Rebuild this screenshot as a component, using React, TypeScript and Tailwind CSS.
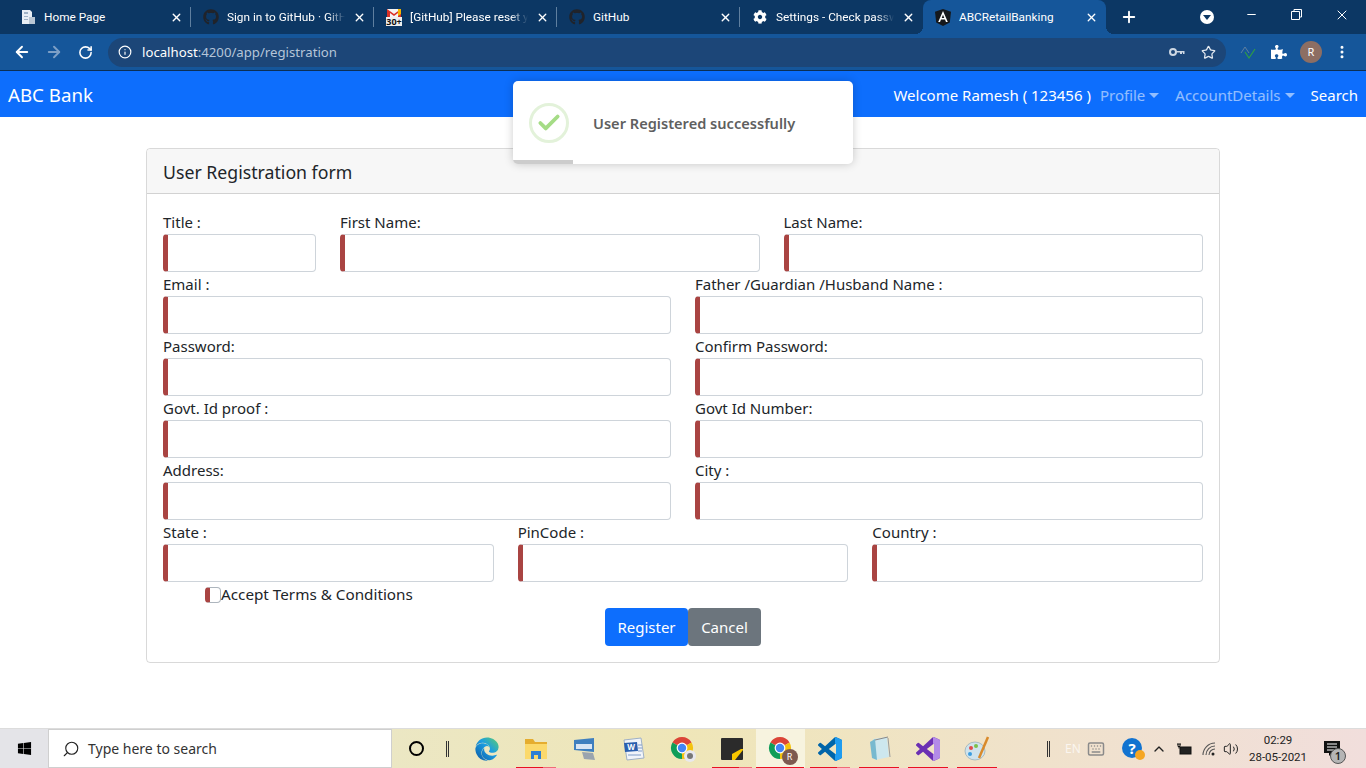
import { ArrowLeft, ArrowRight, RotateCw, Info, Star, EllipsisVertical, X, Plus, Minus, ChevronUp, Check, Search, Volume2, Keyboard } from "lucide-react";
import { FaGithub, FaWindows, FaCog, FaPuzzlePiece, FaEdge } from "react-icons/fa";
import type { ReactNode } from "react";

const font = "font-['Noto_Sans','Open_Sans',sans-serif]";

const studioPath =
  "M23.15 2.587L18.21.21a1.494 1.494 0 0 0-1.705.29l-9.46 8.63-4.12-3.128a.999.999 0 0 0-1.276.057L.327 7.261A1 1 0 0 0 .326 8.74L3.899 12 .326 15.26a1 1 0 0 0 .001 1.479L1.65 17.94a.999.999 0 0 0 1.276.057l4.12-3.128 9.46 8.63a1.492 1.492 0 0 0 1.704.29l4.942-2.377A1.5 1.5 0 0 0 24 20.06V3.939a1.5 1.5 0 0 0-.85-1.352zm-5.146 14.861L10.826 12l7.178-5.448v10.896z";

type TabProps = {
  title: string;
  icon: ReactNode;
  active?: boolean;
  divider?: boolean;
  fade?: boolean;
};

function Tab({ title, icon, active, divider, fade }: TabProps) {
  return (
    <div
      className={`w-[183px] h-[34px] flex items-center pl-[12px] pr-[8px] gap-[8px] relative ${
        active ? "bg-[#15569a] rounded-t-[8px]" : ""
      }`}
    >
      <div className="w-[16px] h-[16px] shrink-0 flex items-center justify-center">{icon}</div>
      <div
        className={`flex-1 overflow-hidden whitespace-nowrap font-['Roboto',sans-serif] text-[11.8px] leading-[16px] text-white ${
          fade ? "[mask-image:linear-gradient(to_right,black_85%,transparent)]" : ""
        }`}
      >
        {title}
      </div>
      <X size={13} strokeWidth={2.5} className="text-white shrink-0" />
      {divider && <div className="absolute right-0 top-[7px] h-[20px] w-px bg-[#5f7f9f]" />}
      {active && (
        <>
          <div className="absolute -left-[8px] bottom-0 w-[8px] h-[8px] bg-[radial-gradient(circle_at_0_0,transparent_8px,#15569a_8px)]" />
          <div className="absolute -right-[8px] bottom-0 w-[8px] h-[8px] bg-[radial-gradient(circle_at_100%_0,transparent_8px,#15569a_8px)]" />
        </>
      )}
    </div>
  );
}

function HomeIcon() {
  return (
    <svg width="16" height="16" viewBox="0 0 16 16">
      <path d="M2 1h8l2 2v12H2z" fill="#e8eef5" />
      <path d="M9 8h6v7H9z" fill="#b9c6d4" />
      <path d="M4 3h4v2H4zM4 7h4v1H4zM4 10h4v1H4z" fill="#9fb2c6" />
    </svg>
  );
}

function GmailIcon() {
  return (
    <svg width="16" height="18" viewBox="0 0 16 18">
      <path d="M1 1h14v9H1z" fill="#f4f4f4" />
      <path d="M1 1l7 5 7-5v9h-3V5L8 8 4 5v5H1z" fill="#d93025" />
      <path d="M12 1h3v5l-3 2z" fill="#f4b400" />
      <rect x="0" y="9" width="16" height="9" fill="#eeeeee" />
      <text x="8" y="17" textAnchor="middle" fontSize="9" fontWeight="700" fill="#111">30+</text>
    </svg>
  );
}

function AngularIcon() {
  return (
    <svg width="16" height="17" viewBox="0 0 16 17">
      <path d="M8 0l8 2.8-1.2 10.6L8 17l-6.8-3.6L0 2.8z" fill="#15181c" />
      <path d="M8 2L3.2 13h1.8l1-2.5h4l1 2.5h1.8zM6.7 9L8 5.8 9.3 9z" fill="#fff" />
    </svg>
  );
}

function Field({ label, className }: { label: string; className?: string }) {
  return (
    <div className={className}>
      <label className="block h-[24px] text-[15px] leading-[24px] text-[#212529]">{label}</label>
      <div className="h-[38px] bg-white border border-[#ced4da] border-l-[5px] border-l-[#a94442] rounded-[4px]" />
    </div>
  );
}

function TaskIcon({ children, mark, tail, active }: { children: ReactNode; mark?: boolean; tail?: boolean; active?: boolean }) {
  return (
    <div className={`w-[49px] h-[40px] flex items-center justify-center relative ${active ? "bg-[#f7f3df]" : ""}`}>
      {children}
      {mark && (
        <div className={`absolute bottom-0 h-[2px] flex ${active ? "left-0 right-[1px]" : "left-[5px] right-[4px]"}`}>
          <div className="flex-1 bg-[#e81123]" />
          {tail && <div className="w-[13px] bg-[#f06b78]" />}
        </div>
      )}
    </div>
  );
}

function ChromeIcon({ badge }: { badge: ReactNode }) {
  return (
    <div className="relative w-[26px] h-[26px]">
      <svg width="24" height="24" viewBox="0 0 24 24">
        <path d="M12 12L2.47 6.5A11 11 0 0 1 21.53 6.5Z" fill="#db4437" />
        <path d="M12 12L21.53 6.5A11 11 0 0 1 12 23Z" fill="#f4c20d" />
        <path d="M12 12L12 23A11 11 0 0 1 2.47 6.5Z" fill="#0f9d58" />
        <circle cx="12" cy="12" r="5.4" fill="#fff" />
        <circle cx="12" cy="12" r="4.2" fill="#4285f4" />
      </svg>
      {badge}
    </div>
  );
}

function StudioIcon({ id, dark, light }: { id: string; dark: string; light: string }) {
  return (
    <svg width="24" height="24" viewBox="0 0 24 24">
      <defs>
        <clipPath id={id}>
          <rect x="17" y="0" width="7" height="24" />
        </clipPath>
      </defs>
      <path d={studioPath} fill={dark} />
      <path d={studioPath} fill={light} clipPath={`url(#${id})`} />
    </svg>
  );
}

export default function App() {
  return (
    <div className={`${font} w-[1366px] h-[768px] overflow-hidden bg-white flex flex-col relative`}>
      {/* chrome tabs */}
      <div className="h-[34px] bg-[#0c3764] flex items-start pl-[8px] text-white shrink-0">
        <Tab title="Home Page" icon={<HomeIcon />} divider />
        <Tab title="Sign in to GitHub · GitHub" icon={<FaGithub size={16} className="text-[#20232a]" />} divider fade />
        <Tab title="[GitHub] Please reset your" icon={<GmailIcon />} divider fade />
        <Tab title="GitHub" icon={<FaGithub size={16} className="text-[#20232a]" />} divider />
        <Tab title="Settings - Check passwords" icon={<FaCog size={14} className="text-white" />} fade />
        <Tab title="ABCRetailBanking" icon={<AngularIcon />} active />
        <Plus size={18} strokeWidth={2.5} className="ml-[14px] mt-[8px] text-white" />
        <div className="ml-[62px] mt-[10px] w-[14px] h-[14px] rounded-full bg-white flex items-center justify-center">
          <div className="w-0 h-0 border-x-[4px] border-x-transparent border-t-[5px] border-t-[#0c3764]" />
        </div>
        <Minus size={13} className="ml-[31px] mt-[8px]" />
        <svg width="11" height="11" viewBox="0 0 11 11" className="ml-[33px] mt-[9px]">
          <path d="M3 2.5V.5h7.5V8H8.5M.5 2.5h8v8h-8z" fill="none" stroke="#fff" strokeWidth="1" />
        </svg>
        <X size={16} strokeWidth={1.5} className="ml-[32px] mt-[7px]" />
      </div>

      {/* address bar */}
      <div className="h-[37px] bg-[#15569a] border-b border-[#0b2f55] flex items-center shrink-0 text-white">
        <ArrowLeft size={18} strokeWidth={2.5} className="ml-[13px]" />
        <ArrowRight size={18} strokeWidth={2.5} className="ml-[14px] text-[#7d9fc6]" />
        <RotateCw size={15} strokeWidth={2.5} className="ml-[15px]" />
        <div className="ml-[15px] w-[1118px] h-[29px] rounded-full bg-[#1c4678] flex items-center pl-[10px] pr-[10px]">
          <Info size={14} strokeWidth={2} />
          <div className="ml-[10px] text-[13.2px] leading-[18px] pb-[1px]">
            localhost<span className="text-[#b5c5d8]">:4200/app/registration</span>
          </div>
          <svg width="16" height="10" viewBox="0 0 16 10" className="ml-auto">
            <circle cx="4" cy="5" r="3" fill="none" stroke="#cdd7e3" strokeWidth="2" />
            <path d="M7 4h8.500v3H14V5.500h-1V7h-2V5.500H7z" fill="#cdd7e3" />
          </svg>
          <Star size={15} className="ml-[16px] text-[#e3e9f0]" />
        </div>
        <svg width="18" height="16" viewBox="0 0 18 16" className="ml-[14px]">
          <path d="M1 9l4-6 4 6" fill="none" stroke="#5f7f9f" strokeWidth="1" />
          <path d="M5 8l4 6 6-9" fill="none" stroke="#2f9e44" strokeWidth="1.2" />
        </svg>
        <FaPuzzlePiece size={16} className="ml-[13px]" />
        <div className="ml-[13px] w-[22px] h-[22px] rounded-full bg-[#8d6e63] text-[11px] flex items-center justify-center">R</div>
        <EllipsisVertical size={16} strokeWidth={2.5} className="ml-[12px]" />
      </div>

      {/* navbar */}
      <nav className="h-[46px] bg-[#0d6efd] flex items-center px-[8px] shrink-0 text-white">
        <div className="text-[18.7px] leading-[30px] pt-[1px]">ABC Bank</div>
        <div className="ml-auto flex items-center text-[15px] pt-[2px]">
          <span>Welcome Ramesh ( 123456 )</span>
          <span className="ml-[9px] text-white/55 flex items-center">
            Profile
            <span className="ml-[4px] w-0 h-0 border-x-[5px] border-x-transparent border-t-[5px] border-t-white/55" />
          </span>
          <span className="ml-[16px] text-white/55 flex items-center">
            AccountDetails
            <span className="ml-[4px] w-0 h-0 border-x-[5px] border-x-transparent border-t-[5px] border-t-white/55" />
          </span>
          <span className="ml-[16px]">Search</span>
        </div>
      </nav>

      {/* page */}
      <main className="flex-1 px-[146px] pt-[31px]">
        <div className="h-[515px] border border-black/15 rounded-[4px] text-[#212529]">
          <div className="h-[45px] bg-[#f7f7f7] border-b border-black/15 rounded-t-[4px] px-[16px] pt-[2px] flex items-center text-[17.7px]">
            User Registration form
          </div>
          <div className="px-[16px] pt-[16px]">
            <div className="flex gap-[24px]">
              <Field label="Title :" className="w-[153px]" />
              <Field label="First Name:" className="flex-1" />
              <Field label="Last Name:" className="flex-1" />
            </div>
            <div className="grid grid-cols-2 gap-x-[24px]">
              <Field label="Email :" />
              <Field label="Father /Guardian /Husband Name :" />
              <Field label="Password:" />
              <Field label="Confirm Password:" />
              <Field label="Govt. Id proof :" />
              <Field label="Govt Id Number:" />
              <Field label="Address:" />
              <Field label="City :" />
            </div>
            <div className="grid grid-cols-3 gap-x-[24px]">
              <Field label="State :" />
              <Field label="PinCode :" />
              <Field label="Country :" />
            </div>
            <div className="h-[26px] pl-[42px] flex items-center text-[15.25px]">
              <div className="w-[16px] h-[16px] border border-[#adb5bd] border-l-[5px] border-l-[#a94442] rounded-[4px]" />
              <span className="leading-[24px] pb-[2px]">Accept Terms &amp; Conditions</span>
            </div>
            <div className="flex justify-center">
              <button className="h-[38px] w-[83px] bg-[#0d6efd] text-white rounded-[4px] text-[15px]">Register</button>
              <button className="h-[38px] w-[73px] bg-[#6c757d] text-white rounded-[4px] text-[15px]">Cancel</button>
            </div>
          </div>
        </div>
      </main>

      {/* toast */}
      <div className="absolute left-[513px] top-[81px] w-[340px] h-[83px] bg-white rounded-[5px] shadow-[0_0_10px_rgba(0,0,0,0.2)] overflow-hidden flex items-center">
        <div className="ml-[16px] w-[40px] h-[40px] rounded-full border-[3px] border-[#e3f2da] flex items-center justify-center">
          <Check size={26} strokeWidth={3.5} className="text-[#a5dc86]" />
        </div>
        <div className="ml-[24px] pt-[3px] text-[14.6px] font-semibold text-[#5f5f5f]">User Registered successfully</div>
        <div className="absolute left-0 bottom-0 w-[60px] h-[4px] bg-black/20" />
      </div>

      {/* windows taskbar */}
      <div className="h-[40px] flex shrink-0 bg-gradient-to-r from-[#e6e8d2] via-[#efe6b8] to-[#f1dedc] border-t border-[#dcdcdc]">
        <div className="w-[48px] flex items-center justify-center bg-[#e4e4e8]">
          <FaWindows size={15} className="text-black" />
        </div>
        <div className="w-[344px] bg-white border border-[#cfcfcf] flex items-center pl-[13px]">
          <Search size={18} strokeWidth={1.5} className="text-[#222] -scale-x-100" />
          <span className="ml-[8px] text-[14px] text-[#333]">Type here to search</span>
        </div>
        <div className="w-[48px] flex items-center justify-center">
          <div className="w-[15px] h-[15px] rounded-full border-[2.5px] border-black" />
        </div>
        <div className="w-[22px] pl-[6px] flex items-center justify-start">
          <div className="w-[3px] h-[16px] border-x border-[#333]" />
        </div>
        <TaskIcon>
          <svg width="0" height="0" className="absolute">
            <defs>
              <linearGradient id="edgeG" x1="0" y1="1" x2="1" y2="0">
                <stop offset="0" stopColor="#0c59a4" />
                <stop offset="0.55" stopColor="#1b9de2" />
                <stop offset="1" stopColor="#5fd06c" />
              </linearGradient>
            </defs>
          </svg>
          <FaEdge size={24} fill="url(#edgeG)" />
        </TaskIcon>
        <TaskIcon mark tail>
          <svg width="24" height="22" viewBox="0 0 24 22">
            <path d="M1 1h8l2 3h12v17H1z" fill="#e5ad2f" />
            <path d="M1 6h22v15H1z" fill="#fbd96b" />
            <path d="M7 13h10v8h-3v-4h-4v4H7z" fill="#2d7fd3" />
          </svg>
        </TaskIcon>
        <TaskIcon>
          <svg width="24" height="24" viewBox="0 0 24 24">
            <path d="M1 3l20-2v14L1 13z" fill="#3f7fbf" />
            <path d="M3 7h16v5H3z" fill="#d9e5f4" />
            <path d="M9 15l11 1 2 7-11-1z" fill="#9aa4ae" />
          </svg>
        </TaskIcon>
        <TaskIcon>
          <svg width="24" height="24" viewBox="0 0 24 24">
            <path d="M2 3l17-2 3 20-17 2z" fill="#f1f4f9" stroke="#9fb0c6" strokeWidth="1" />
            <path d="M2 6l13-1 1 9-13 1z" fill="#2b5fae" />
            <text x="9" y="13" textAnchor="middle" fontSize="8" fontWeight="700" fill="#fff">W</text>
            <path d="M16 8h4M16 11h4M16 14h4M6 18h13" stroke="#7f9cc8" strokeWidth="1" />
          </svg>
        </TaskIcon>
        <TaskIcon>
          <ChromeIcon
            badge={
              <div className="absolute right-0 bottom-0 w-[12px] h-[12px] rounded-full bg-[#e8e8ee] flex items-center justify-center">
                <div className="w-[6px] h-[6px] rounded-full bg-[#777]" />
              </div>
            }
          />
        </TaskIcon>
        <TaskIcon mark tail>
          <svg width="24" height="24" viewBox="0 0 24 24">
            <rect x="1" y="1" width="22" height="22" rx="1" fill="#2b2b2b" />
            <path d="M12 23v-6l9-5h2v1l-8 10z" fill="#f7c600" />
          </svg>
        </TaskIcon>
        <TaskIcon active mark>
          <ChromeIcon
            badge={
              <div className="absolute -right-[4px] -bottom-[3px] w-[16px] h-[16px] rounded-full bg-[#7d5a50] text-white text-[9px] leading-[16px] text-center">R</div>
            }
          />
        </TaskIcon>
        <TaskIcon mark tail>
          <StudioIcon id="vsCodeClip" dark="#0065a9" light="#1f9cf0" />
        </TaskIcon>
        <TaskIcon mark>
          <svg width="24" height="26" viewBox="0 0 24 26">
            <path d="M6 3l14-2 2 20-14 3z" fill="#cde7ee" />
            <path d="M3 6l5-3 2 21-5-2z" fill="#77b9cf" />
            <path d="M8 4l13-3" stroke="#888" strokeWidth="1" />
            <path d="M21 2l2 19" stroke="#9b9b9b" strokeWidth="1" />
          </svg>
        </TaskIcon>
        <TaskIcon mark>
          <StudioIcon id="vsClip" dark="#6b2fb3" light="#b38ae8" />
        </TaskIcon>
        <TaskIcon mark>
          <svg width="28" height="28" viewBox="0 0 28 28">
            <ellipse cx="12" cy="16" rx="10" ry="9" fill="#cfe3ec" stroke="#8fa9b8" strokeWidth="0.7" />
            <circle cx="8" cy="13" r="2" fill="#e24b4b" />
            <circle cx="13" cy="11" r="2" fill="#7cc04b" />
            <circle cx="7" cy="19" r="2" fill="#3c9de0" />
            <path d="M25 2l-9 21" stroke="#d98a2b" strokeWidth="2.5" />
          </svg>
        </TaskIcon>
        <div className="ml-[46px] w-[3px] self-center h-[16px] border-x border-[#333]" />
        <span className="ml-[15px] w-[16px] self-center text-[12px] text-white/70">EN</span>
        <Keyboard size={18} className="ml-[6px] self-center text-[#8a8a8a]" />
        <div className="ml-[17px] self-center relative w-[20px] h-[22px]">
          <div className="w-[20px] h-[20px] rounded-full bg-[#1273d0] text-white text-[15px] font-bold leading-[20px] text-center">?</div>
          <div className="absolute -right-[3px] bottom-0 w-[10px] h-[10px] rounded-full bg-[#f5a623]" />
        </div>
        <ChevronUp size={16} className="ml-[9px] self-center text-[#222]" />
        <svg width="16" height="12" viewBox="0 0 16 12" className="ml-[9px] self-center">
          <path d="M1 1h4M2 1v2.500h2V1M3 3.500v2" stroke="#111" strokeWidth="1" fill="none" />
          <rect x="4" y="4" width="11" height="7" fill="#222" stroke="#111" />
        </svg>
        <svg width="16" height="16" viewBox="0 0 16 16" className="ml-[9px] self-center">
          <path d="M2 14a12 12 0 0 1 12-12M5 14a9 9 0 0 1 9-9M8 14a6 6 0 0 1 6-6" fill="none" stroke="#555" strokeWidth="1.1" />
          <circle cx="12" cy="13" r="1.5" fill="#222" />
        </svg>
        <Volume2 size={16} strokeWidth={1.5} className="ml-[6px] self-center text-[#222]" />
        <div className="ml-[9px] w-[60px] self-center text-center font-['Roboto',sans-serif] text-[11.5px] leading-[17px] whitespace-nowrap text-[#222]">
          <div>02:29</div>
          <div>28-05-2021</div>
        </div>
        <div className="ml-[16px] self-center relative">
          <svg width="16" height="16" viewBox="0 0 16 16">
            <path d="M0 0h16v12H8l-3 3v-3H0z" fill="#111" />
            <path d="M3 3h10M3 6h10M3 9h7" stroke="#fff" strokeWidth="1" />
          </svg>
          <div className="absolute left-[6px] top-[7px] w-[16px] h-[16px] rounded-full bg-[#b5b5b5] border border-[#555] text-[11px] font-semibold leading-[14px] text-center text-[#222]">1</div>
        </div>
      </div>
    </div>
  );
}
